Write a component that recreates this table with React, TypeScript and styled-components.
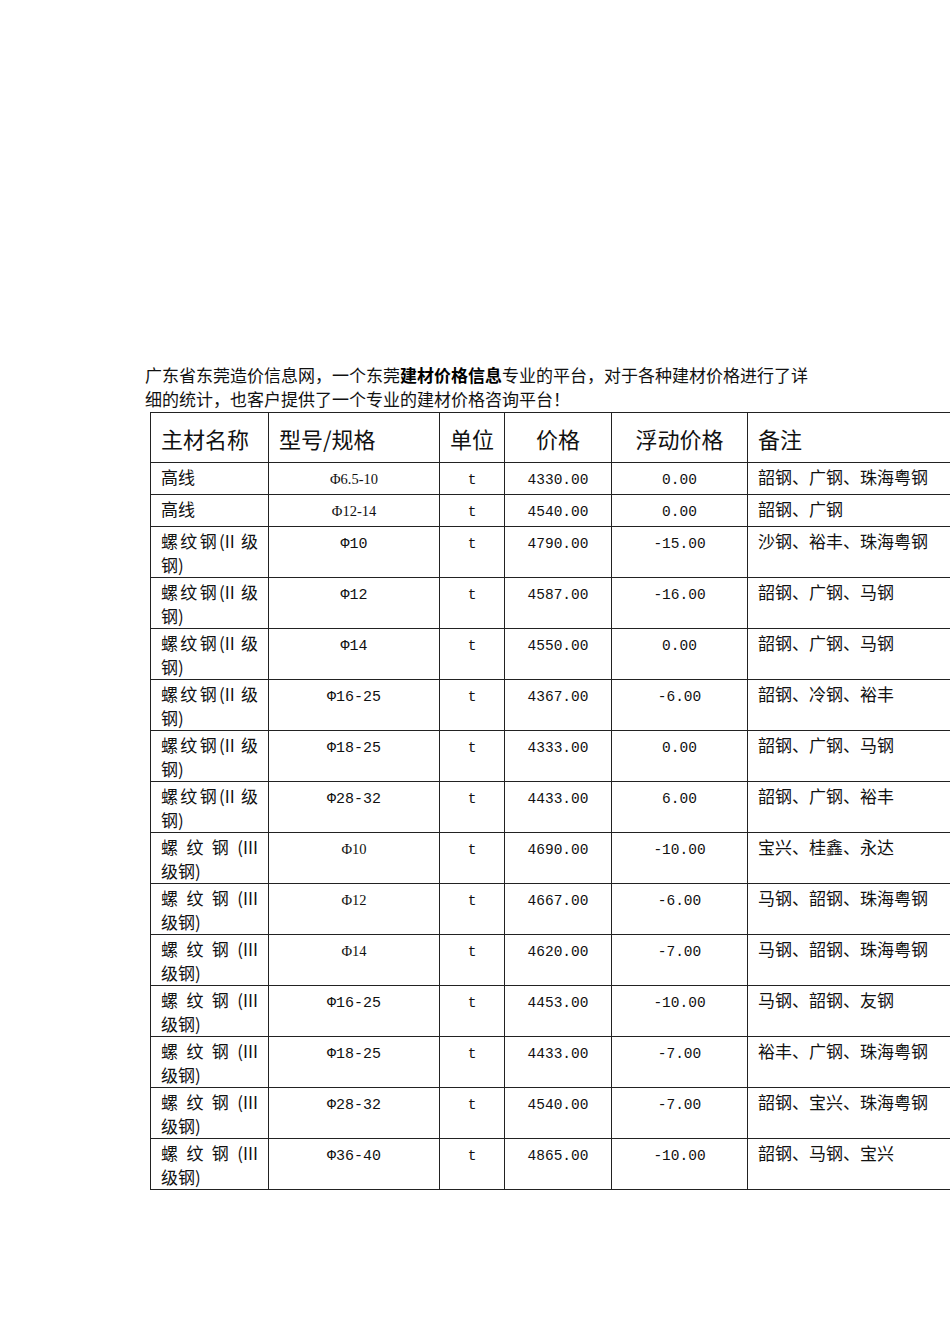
import React from 'react';
import styled, { createGlobalStyle } from 'styled-components';

const GlobalStyle = createGlobalStyle`
  html, body {
    margin: 0;
    padding: 0;
    background: #fff;
  }
  body {
    font-family: "Noto Sans CJK SC", sans-serif;
    color: #111;
  }
`;

const CJK = `"Noto Sans CJK SC", sans-serif`;
const MONO = `"Liberation Mono", "Noto Sans CJK SC", monospace`;
const SERIF = `"Liberation Serif", "Noto Sans CJK SC", serif`;

type SpecFont = 'serif' | 'mono';

interface PriceRow {
  name: string[];
  spec: string;
  specFont: SpecFont;
  price: string;
  diff: string;
  note: string;
}

const II = ['螺纹钢(II 级', '钢)'];
const III = ['螺纹钢(III', '级钢)'];

const rows: PriceRow[] = [
  { name: ['高线'], spec: 'Φ6.5-10', specFont: 'serif', price: '4330.00', diff: '0.00', note: '韶钢、广钢、珠海粤钢' },
  { name: ['高线'], spec: 'Φ12-14', specFont: 'serif', price: '4540.00', diff: '0.00', note: '韶钢、广钢' },
  { name: II, spec: 'Φ10', specFont: 'mono', price: '4790.00', diff: '-15.00', note: '沙钢、裕丰、珠海粤钢' },
  { name: II, spec: 'Φ12', specFont: 'mono', price: '4587.00', diff: '-16.00', note: '韶钢、广钢、马钢' },
  { name: II, spec: 'Φ14', specFont: 'mono', price: '4550.00', diff: '0.00', note: '韶钢、广钢、马钢' },
  { name: II, spec: 'Φ16-25', specFont: 'mono', price: '4367.00', diff: '-6.00', note: '韶钢、冷钢、裕丰' },
  { name: II, spec: 'Φ18-25', specFont: 'mono', price: '4333.00', diff: '0.00', note: '韶钢、广钢、马钢' },
  { name: II, spec: 'Φ28-32', specFont: 'mono', price: '4433.00', diff: '6.00', note: '韶钢、广钢、裕丰' },
  { name: III, spec: 'Φ10', specFont: 'serif', price: '4690.00', diff: '-10.00', note: '宝兴、桂鑫、永达' },
  { name: III, spec: 'Φ12', specFont: 'serif', price: '4667.00', diff: '-6.00', note: '马钢、韶钢、珠海粤钢' },
  { name: III, spec: 'Φ14', specFont: 'serif', price: '4620.00', diff: '-7.00', note: '马钢、韶钢、珠海粤钢' },
  { name: III, spec: 'Φ16-25', specFont: 'mono', price: '4453.00', diff: '-10.00', note: '马钢、韶钢、友钢' },
  { name: III, spec: 'Φ18-25', specFont: 'mono', price: '4433.00', diff: '-7.00', note: '裕丰、广钢、珠海粤钢' },
  { name: III, spec: 'Φ28-32', specFont: 'mono', price: '4540.00', diff: '-7.00', note: '韶钢、宝兴、珠海粤钢' },
  { name: III, spec: 'Φ36-40', specFont: 'mono', price: '4865.00', diff: '-10.00', note: '韶钢、马钢、宝兴' },
];

const Page = styled.div`
  width: 950px;
  min-height: 1344px;
  box-sizing: border-box;
  padding: 363px 0 0 145px;
  overflow: hidden;
`;

const Intro = styled.div`
  width: 680px;
  font-family: ${CJK};
  font-size: 17px;
  line-height: 24px;
  color: #111;
`;

const IntroLine = styled.div`
  white-space: nowrap;
`;

const Bold = styled.b`
  font-weight: 700;
  color: #000;
`;

const Table = styled.table`
  margin: 1px 0 0 5px;
  width: 800px;
  border-collapse: collapse;
  table-layout: fixed;
  border: 1.5px solid #222;
`;

const HeadCell = styled.th<{ $align?: 'left' | 'center' }>`
  height: 49px;
  padding: 0 10px;
  border: 1px solid #222;
  font-family: ${CJK};
  font-size: 22px;
  font-weight: 400;
  color: #111;
  text-align: ${({ $align }) => $align ?? 'center'};
  vertical-align: middle;
`;

const Cell = styled.td<{ $align?: 'left' | 'center'; $tall?: boolean }>`
  height: ${({ $tall }) => ($tall ? '50px' : '32px')};
  padding: 2px 10px 0;
  box-sizing: border-box;
  border: 1px solid #222;
  font-family: ${CJK};
  font-size: 17px;
  line-height: 24px;
  color: #111;
  text-align: ${({ $align }) => $align ?? 'center'};
  vertical-align: top;
`;

const NameLine = styled.div<{ $justify?: boolean }>`
  text-align: ${({ $justify }) => ($justify ? 'justify' : 'left')};
  text-align-last: ${({ $justify }) => ($justify ? 'justify' : 'left')};
  white-space: nowrap;
`;

const Spec = styled.span<{ $font: SpecFont }>`
  font-family: ${({ $font }) => ($font === 'serif' ? SERIF : MONO)};
  font-size: ${({ $font }) => ($font === 'serif' ? '14.5px' : '15px')};
`;

const Num = styled.span`
  font-family: ${MONO};
  font-size: 14.5px;
`;

export default function App() {
  return (
    <Page>
      <GlobalStyle />
      <Intro>
        <IntroLine>
          <span>广东省东莞造价信息网，一个东莞</span>
          <Bold>建材价格信息</Bold>
          <span>专业的平台，对于各种建材价格进行了详</span>
        </IntroLine>
        <IntroLine>细的统计，也客户提供了一个专业的建材价格咨询平台！</IntroLine>
      </Intro>
      <Table>
        <colgroup>
          <col style={{ width: 118 }} />
          <col style={{ width: 171 }} />
          <col style={{ width: 65 }} />
          <col style={{ width: 107 }} />
          <col style={{ width: 136 }} />
          <col style={{ width: 203 }} />
        </colgroup>
        <thead>
          <tr>
            <HeadCell $align="left">主材名称</HeadCell>
            <HeadCell $align="left">型号/规格</HeadCell>
            <HeadCell>单位</HeadCell>
            <HeadCell>价格</HeadCell>
            <HeadCell>浮动价格</HeadCell>
            <HeadCell $align="left">备注</HeadCell>
          </tr>
        </thead>
        <tbody>
          {rows.map((row, i) => {
            const tall = row.name.length > 1;
            return (
              <tr key={i}>
                <Cell $align="left" $tall={tall}>
                  {row.name.map((line, j) => (
                    <NameLine key={j} $justify={tall && j === 0}>
                      {line}
                    </NameLine>
                  ))}
                </Cell>
                <Cell $tall={tall}>
                  <Spec $font={row.specFont}>{row.spec}</Spec>
                </Cell>
                <Cell $tall={tall}>
                  <Num>t</Num>
                </Cell>
                <Cell $tall={tall}>
                  <Num>{row.price}</Num>
                </Cell>
                <Cell $tall={tall}>
                  <Num>{row.diff}</Num>
                </Cell>
                <Cell $align="left" $tall={tall}>
                  {row.note}
                </Cell>
              </tr>
            );
          })}
        </tbody>
      </Table>
    </Page>
  );
}
